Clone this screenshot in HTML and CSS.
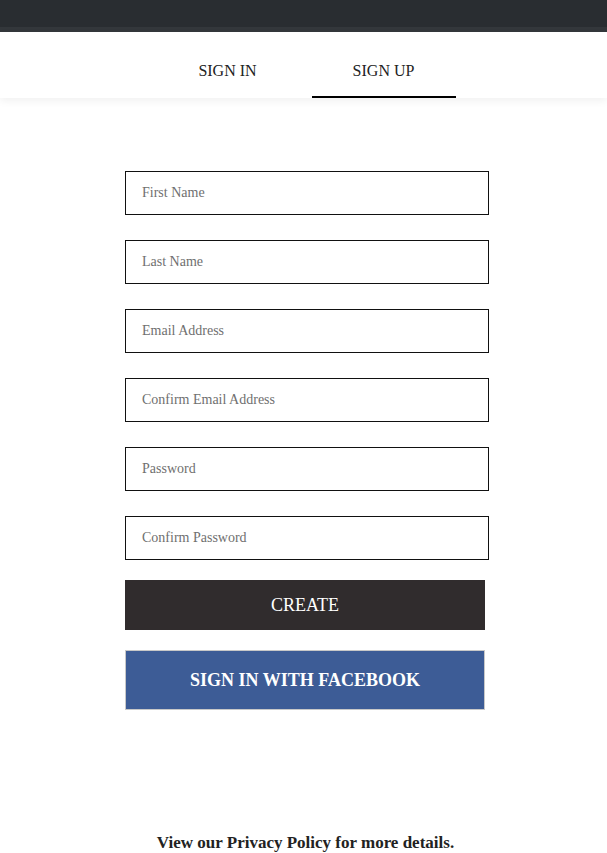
FILE: index.html
```html
<!DOCTYPE html>
<html>
<head>
<meta charset="utf-8">
<link rel="stylesheet" href="styles.css">
</head>
<body>
<div class="topbar"></div>
<nav class="tabs">
  <div class="tab">SIGN IN</div>
  <div class="tab active">SIGN UP</div>
</nav>
<main class="form">
  <div class="field">First Name</div>
  <div class="field">Last Name</div>
  <div class="field">Email Address</div>
  <div class="field">Confirm Email Address</div>
  <div class="field">Password</div>
  <div class="field">Confirm Password</div>
  <button class="btn create">CREATE</button>
  <button class="btn facebook">SIGN IN WITH FACEBOOK</button>
</main>
<p class="privacy">View our Privacy Policy for more details.</p>
</body>
</html>
```
FILE: styles.css
```css
* { box-sizing: border-box; }
html, body { margin: 0; padding: 0; background: #fff; }
body {
  font-family: "Liberation Serif", "Times New Roman", serif;
  color: #222;
  width: 607px;
  overflow: hidden;
}
.topbar {
  height: 32px;
  background: #292d31;
  border-bottom: 5px solid #33373b;
}
.tabs {
  height: 66px;
  display: flex;
  justify-content: center;
  gap: 12px;
  padding-left: 4px;
  background: #fff;
  box-shadow: 0 3px 8px rgba(0,0,0,0.06);
  position: relative;
}
.tab {
  width: 144px;
  display: flex;
  align-items: center;
  justify-content: center;
  font-size: 16px;
  color: #222;
  padding-top: 13px;
  border-bottom: 2px solid transparent;
}
.tab.active { border-bottom-color: #000; }
.form {
  padding: 73px 0 0 125px;
  display: flex;
  flex-direction: column;
  align-items: flex-start;
}
.field {
  width: 364px;
  height: 44px;
  border: 1px solid #111;
  padding-left: 16px;
  display: flex;
  align-items: center;
  font-size: 14px;
  color: #6f6f6f;
  margin-bottom: 25px;
}
.field:nth-child(6) { margin-bottom: 20px; }
.btn {
  width: 360px;
  font-family: "Liberation Serif", "Times New Roman", serif;
  color: #fff;
  border: none;
  padding: 0;
  display: flex;
  align-items: center;
  justify-content: center;
}
.create {
  height: 50px;
  background: #302c2d;
  font-size: 18px;
  margin-bottom: 20px;
}
.facebook {
  height: 60px;
  background: #3d5c96;
  border: 1px solid #c8c8c8;
  font-size: 18px;
  font-weight: bold;
}
.privacy {
  margin: 123px 0 0 0;
  padding-left: 4px;
  text-align: center;
  font-size: 17px;
  font-weight: bold;
  color: #222;
}
```
